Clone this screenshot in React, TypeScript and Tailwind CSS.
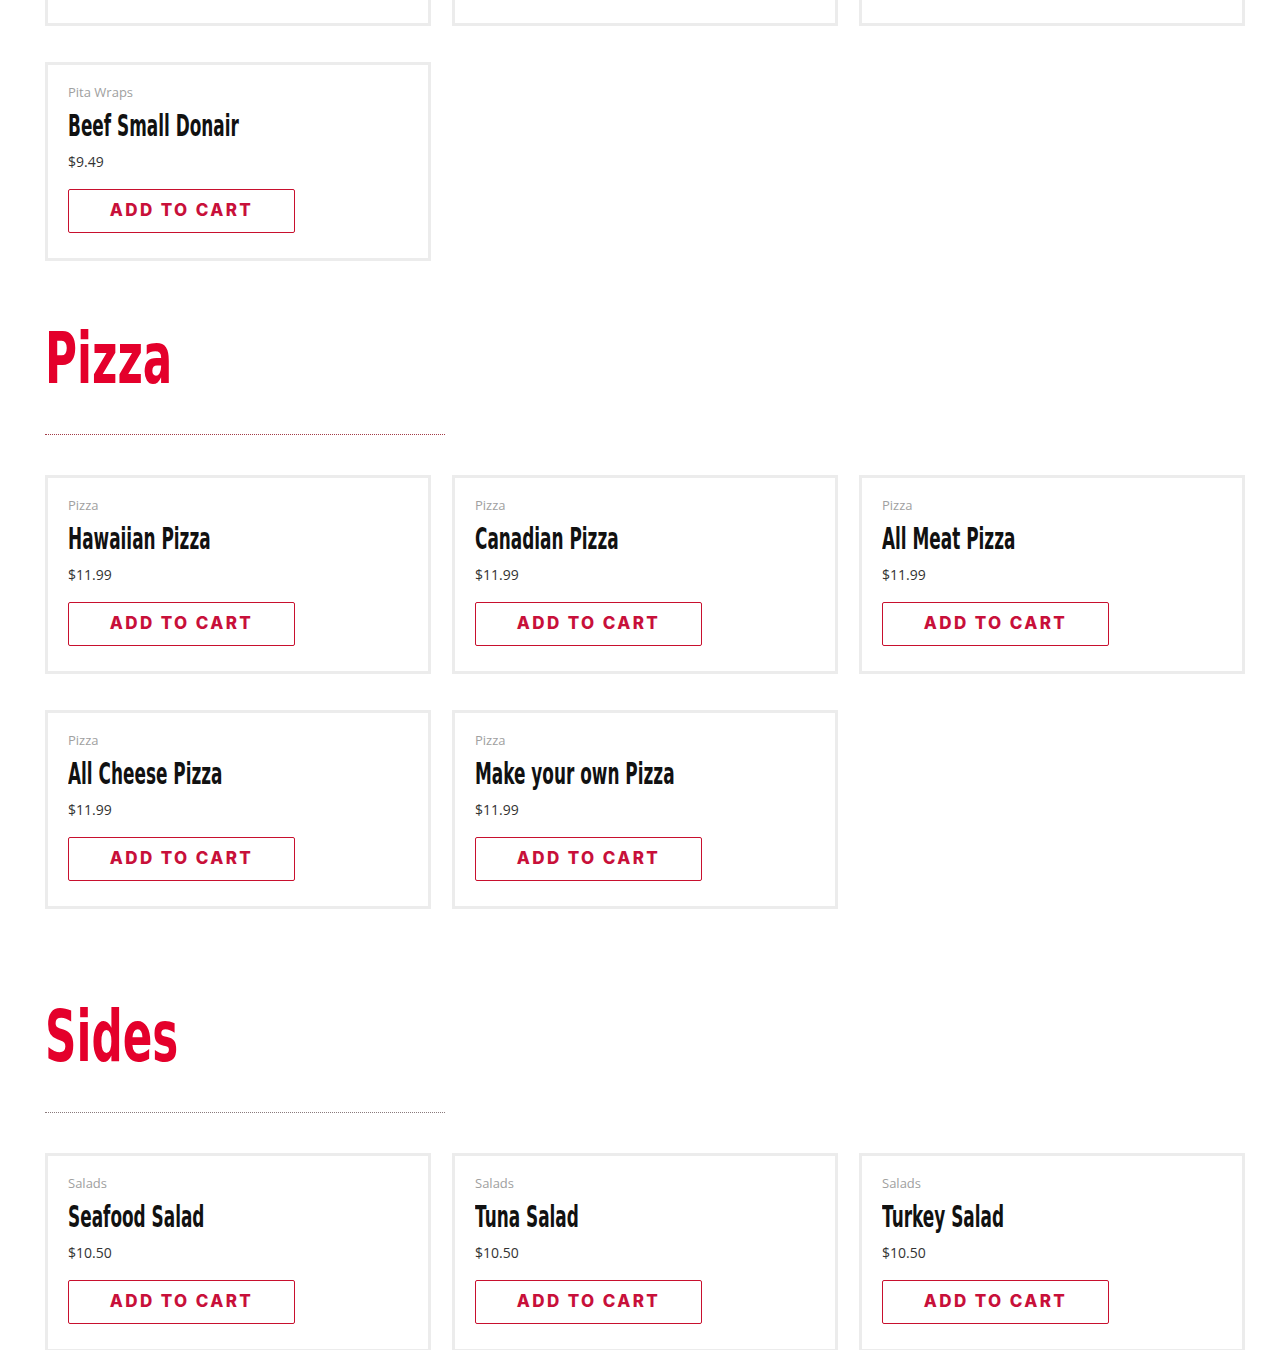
import React from 'react';

type Item = { category: string; name: string; price: string };

const wraps: Item[] = [
  { category: 'Pita Wraps', name: 'Chicken Donair', price: '$9.49' },
  { category: 'Pita Wraps', name: 'Beef Large Donair', price: '$11.49' },
  { category: 'Pita Wraps', name: 'Chicken Small Donair', price: '$9.49' },
  { category: 'Pita Wraps', name: 'Beef Small Donair', price: '$9.49' },
];

const pizzas: Item[] = [
  { category: 'Pizza', name: 'Hawaiian Pizza', price: '$11.99' },
  { category: 'Pizza', name: 'Canadian Pizza', price: '$11.99' },
  { category: 'Pizza', name: 'All Meat Pizza', price: '$11.99' },
  { category: 'Pizza', name: 'All Cheese Pizza', price: '$11.99' },
  { category: 'Pizza', name: 'Make your own Pizza', price: '$11.99' },
];

const sides: Item[] = [
  { category: 'Salads', name: 'Seafood Salad', price: '$10.50' },
  { category: 'Salads', name: 'Tuna Salad', price: '$10.50' },
  { category: 'Salads', name: 'Turkey Salad', price: '$10.50' },
];

// no condensed face installed, so DejaVu bold gets squeezed horizontally
const condensed = { fontFamily: '"DejaVu Sans", sans-serif' };
const body = { fontFamily: '"Open Sans", "Noto Sans", sans-serif' };
const btn = { fontFamily: '"Inter", "DejaVu Sans", sans-serif' };

function Card({ item }: { item: Item }) {
  return (
    <div className="border-[3px] border-[#ececec] bg-white px-5 pt-[17px] h-[199px]">
      <p className="text-[13px] leading-[20px] text-[#a0a0a0]" style={body}>{item.category}</p>
      <h3 className="mt-[3px] h-[40px] leading-[40px] whitespace-nowrap">
        <span
          className="inline-block origin-left scale-x-[0.545] text-[31px] text-[#111] font-bold"
          style={condensed}
        >
          {item.name}
        </span>
      </h3>
      <p className="mt-[7px] text-[14px] leading-[20px] text-[#333] font-medium" style={body}>{item.price}</p>
      <button
        className="mt-[17px] w-[227px] h-[44px] border border-[#c8102e] rounded-[2px] text-[#c8103a] text-[17px] font-extrabold tracking-[2.4px] uppercase"
        style={btn}
      >
        Add to Cart
      </button>
    </div>
  );
}

function Grid({ items }: { items: Item[] }) {
  return (
    <div className="grid grid-cols-3 gap-x-[21px] gap-y-[36px]">
      {items.map(i => <Card key={i.name} item={i} />)}
    </div>
  );
}

function Section({ title, items, top, rule }: { title: string; items: Item[]; top: string; rule: string }) {
  return (
    <section className={top}>
      <h2 className="h-[90px] leading-[90px] whitespace-nowrap">
        <span
          className="inline-block origin-left scale-x-[0.615] text-[#e4002b] text-[71px] font-bold"
          style={condensed}
        >
          {title}
        </span>
      </h2>
      <div className={`mt-[30px] w-[400px] border-t border-dotted ${rule}`} />
      <div className="mt-[40px]">
        <Grid items={items} />
      </div>
    </section>
  );
}

export default function App() {
  return (
    <div className="bg-white min-h-screen overflow-hidden">
      <div className="w-[1200px] ml-[45px] -mt-[173px] pb-10">
        <Grid items={wraps} />
        <Section title="Pizza" items={pizzas} top="mt-[53px]" rule="border-[#a33c48]" />
        <Section title="Sides" items={sides} top="mt-[83px]" rule="border-[#8a7a7c]" />
      </div>
    </div>
  );
}
